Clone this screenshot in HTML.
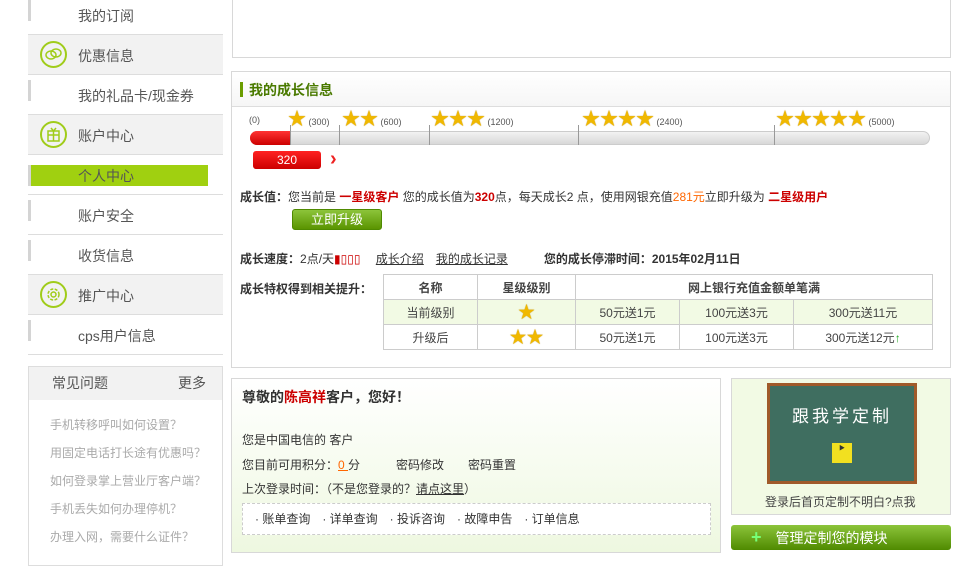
<!DOCTYPE html>
<html><head><meta charset="utf-8"><style>
*{margin:0;padding:0;box-sizing:border-box}
body{width:977px;height:558px;overflow:hidden;background:#fff;font-family:"Liberation Sans","Noto Sans CJK SC",sans-serif;font-size:12px;color:#333;position:relative}
.a{position:absolute}
.row{position:absolute;left:28px;width:195px;height:40px;border-bottom:1px solid #ddd;font-size:14px;color:#555;line-height:42px;padding-left:50px}
.row.g{background:#f2f2f2}
.row .mk{position:absolute;left:0;top:5px;width:3px;height:21px;background:#d4d4d4}
.ic{position:absolute;left:12px;top:6px;width:27px;height:27px;border:2px solid #a0cc1a;border-radius:50%}
.ic svg{position:absolute;left:3px;top:3px}
.faq{position:absolute;left:50px;color:#aaa;font-size:12px}
.box{position:absolute;border:1px solid #d8d8d8}
.star{display:inline-block;color:#f0b800;font-size:18px;line-height:19px;text-shadow:0 0 1px #b08000}
.lbl{font-size:9px;color:#555}
table{border-collapse:collapse;position:absolute;left:383px;top:274px;width:550px;font-size:12px}
td{border:1px solid #ccc;text-align:center;height:25px;color:#444}
b.r{color:#c00}
</style></head><body>
<div class="row" style="top:-5px"><div class="mk"></div>我的订阅</div>
<div class="row g" style="top:35px"><div class="ic"><svg width="17" height="17" viewBox="0 0 17 17" fill="none" stroke="#a0cc1a" stroke-width="1.5"><ellipse cx="6" cy="9" rx="5" ry="4"/><ellipse cx="11" cy="7" rx="5" ry="4"/></svg></div>优惠信息</div>
<div class="row" style="top:75px"><div class="mk"></div>我的礼品卡/现金券</div>
<div class="row g" style="top:115px"><div class="ic"><svg width="17" height="17" viewBox="0 0 17 17" fill="none" stroke="#a0cc1a" stroke-width="1.5"><rect x="3" y="5" width="11" height="10"/><path d="M3 9h11M8.5 5v10M6 2l2.5 3 2.5-3"/></svg></div>账户中心</div>
<div class="row" style="top:155px"><div class="a" style="left:3px;top:10px;width:177px;height:21px;background:#a0d010"></div><div class="mk" style="top:10px"></div><span style="position:relative">个人中心</span></div>
<div class="row" style="top:195px"><div class="mk"></div>账户安全</div>
<div class="row" style="top:235px"><div class="mk"></div>收货信息</div>
<div class="row g" style="top:275px"><div class="ic"><svg width="17" height="17" viewBox="0 0 17 17" fill="none" stroke="#a0cc1a" stroke-width="1.5"><circle cx="8.5" cy="8.5" r="5.5" stroke-dasharray="3 1.5"/><circle cx="8.5" cy="8.5" r="2.5"/></svg></div>推广中心</div>
<div class="row" style="top:315px"><div class="mk"></div>cps用户信息</div>
<div class="box" style="left:28px;top:366px;width:195px;height:200px;border-color:#ddd">
<div style="background:#f2f2f2;height:33px;line-height:33px;font-size:14px;color:#555;padding-left:23px">常见问题<span style="float:right;margin-right:16px">更多</span></div></div>
<div class="faq" style="top:416px">手机转移呼叫如何设置？</div>
<div class="faq" style="top:444px">用固定电话打长途有优惠吗？</div>
<div class="faq" style="top:472px">如何登录掌上营业厅客户端？</div>
<div class="faq" style="top:500px">手机丢失如何办理停机？</div>
<div class="faq" style="top:528px">办理入网，需要什么证件？</div>

<div class="box" style="left:232px;top:-2px;width:719px;height:60px"></div>

<div class="box" style="left:231px;top:71px;width:720px;height:297px">
<div style="height:35px;border-bottom:1px solid #ddd;background:linear-gradient(#fff,#f6f6f6);padding:8px 0 0 8px;font-size:14px;font-weight:bold;color:#4a7a00"><span style="display:inline-block;width:3px;height:15px;background:#6a9c00;vertical-align:-2px;margin-right:6px"></span>我的成长信息</div>
</div>
<div class="a lbl" style="left:249px;top:115px">(0)</div>
<div class="a" style="left:288px;top:110px"><span class="star">★</span><span class="lbl"> (300)</span></div>
<div class="a" style="left:342px;top:110px"><span class="star">★★</span><span class="lbl"> (600)</span></div>
<div class="a" style="left:431px;top:110px"><span class="star">★★★</span><span class="lbl"> (1200)</span></div>
<div class="a" style="left:582px;top:110px"><span class="star">★★★★</span><span class="lbl"> (2400)</span></div>
<div class="a" style="left:776px;top:110px"><span class="star">★★★★★</span><span class="lbl"> (5000)</span></div>
<div class="a" style="left:250px;top:131px;width:680px;height:14px;border-radius:7px;background:linear-gradient(#f2f2f2,#d8d8d8);border:1px solid #ccc"></div>
<div class="a" style="left:250px;top:131px;width:40px;height:14px;border-radius:7px 0 0 7px;background:linear-gradient(#f33,#c00)"></div>
<div class="a" style="left:290px;top:125px;width:1px;height:20px;background:#999"></div>
<div class="a" style="left:339px;top:125px;width:1px;height:20px;background:#999"></div>
<div class="a" style="left:429px;top:125px;width:1px;height:20px;background:#999"></div>
<div class="a" style="left:578px;top:125px;width:1px;height:20px;background:#999"></div>
<div class="a" style="left:774px;top:125px;width:1px;height:20px;background:#999"></div>
<div class="a" style="left:253px;top:151px;width:68px;height:18px;border-radius:3px;background:linear-gradient(#f22,#c00);color:#fff;text-align:center;line-height:18px;font-size:12px">320</div>
<div class="a" style="left:330px;top:148px;color:#e22;font-size:20px;font-weight:bold">›</div>
<div class="a" style="left:240px;top:188px;font-size:12px"><b>成长值：</b>您当前是 <b class="r">一星级客户</b> 您的成长值为<b class="r">320</b>点，每天成长2 点，使用网银充值<span style="color:#f60">281元</span>立即升级为 <b class="r">二星级用户</b></div>
<div class="a" style="left:292px;top:209px;width:90px;height:21px;border-radius:3px;background:linear-gradient(#8cc43a,#5a9400);border:1px solid #4f8a00;color:#fff;text-align:center;line-height:19px;font-size:13px">立即升级</div>
<div class="a" style="left:240px;top:250px"><b>成长速度：</b>2点/天<span style="color:#c00">▮▯▯▯</span>　 <u>成长介绍</u>　<u>我的成长记录</u>　　　<b>您的成长停滞时间：2015年02月11日</b></div>
<div class="a" style="left:240px;top:280px"><b>成长特权得到相关提升：</b></div>
<table>
<tr style="font-weight:bold"><td style="width:94px">名称</td><td style="width:98px">星级级别</td><td colspan="3">网上银行充值金额单笔满</td></tr>
<tr style="background:#f2fae4"><td>当前级别</td><td><span class="star" style="font-size:17px">★</span></td><td style="width:104px">50元送1元</td><td style="width:114px">100元送3元</td><td>300元送11元</td></tr>
<tr><td>升级后</td><td><span class="star" style="font-size:17px">★★</span></td><td>50元送1元</td><td>100元送3元</td><td>300元送12元<span style="color:#2a2">↑</span></td></tr>
</table>

<div class="box" style="left:231px;top:378px;width:490px;height:175px;background:linear-gradient(#fff,#eef8e0)">
<div class="a" style="left:10px;top:8px;font-size:14px;font-weight:bold">尊敬的<span style="color:#c00">陈高祥</span>客户，您好！</div>
<div class="a" style="left:10px;top:52px">您是中国电信的 客户</div>
<div class="a" style="left:10px;top:77px">您目前可用积分：<u style="color:#f60">0 </u>分　　　密码修改　　密码重置</div>
<div class="a" style="left:10px;top:101px">上次登录时间：（不是您登录的？<u>请点这里</u>）</div>
<div class="a" style="left:10px;top:124px;width:469px;height:32px;border:1px dashed #ccc;background:#fff;line-height:30px;padding-left:12px">·  账单查询　·  详单查询　·  投诉咨询　·  故障申告　·  订单信息</div>
</div>

<div class="box" style="left:731px;top:378px;width:220px;height:137px;background:#f2fae4">
<div class="a" style="left:35px;top:4px;width:150px;height:101px;background:#3f6e60;border:3px solid #a05a2a;color:#fff;font-size:17px;text-align:center;padding-top:16px;letter-spacing:3px">跟我学定制
<div style="width:20px;height:20px;background:#f2e020;margin:16px auto 0;color:#333;font-size:6px;letter-spacing:0">▶</div></div>
<div class="a" style="left:33px;top:114px;color:#444">登录后首页定制不明白?点我</div>
</div>
<div class="a" style="left:731px;top:525px;width:220px;height:25px;border-radius:3px;background:linear-gradient(#8cc43a,#4f8a00);color:#fff;font-size:14px;line-height:25px;padding-left:20px"><b style="color:#7f7;font-size:18px">+</b>　管理定制您的模块</div>
</body></html>
